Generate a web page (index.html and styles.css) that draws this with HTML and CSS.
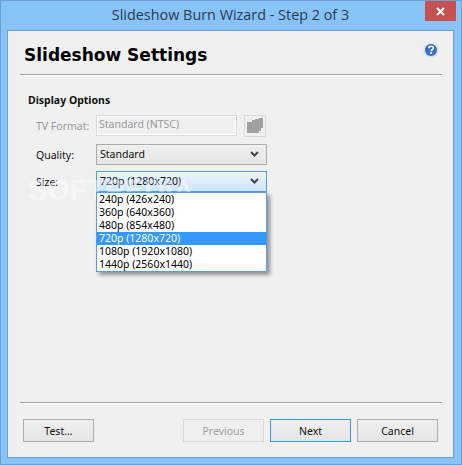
FILE: index.html
```html
<!DOCTYPE html>
<html lang="en">
<head>
    <meta charset="UTF-8">
    <title>Slideshow Burn Wizard</title>
    <link rel="stylesheet" href="styles.css">
</head>
<body>
    <div class="window">
        <div class="titlebar">
            <span class="title">Slideshow Burn Wizard - Step 2 of 3</span>
            <div class="close">
                <svg width="9" height="9" viewBox="0 0 9 9"><path d="M1 1L8 8M8 1L1 8" stroke="#fff" stroke-width="2"/></svg>
            </div>
        </div>
        <div class="content">
            <div class="header">
                <h1>Slideshow Settings</h1>
                <svg class="help" width="16" height="16" viewBox="0 0 16 16">
                    <circle cx="8" cy="8" r="7.5" fill="#d5e0f2"/>
                    <circle cx="8" cy="8" r="6" fill="#3a70c4"/>
                    <path d="M5.8 6.2C5.9 4.9 6.9 4.3 8.1 4.3C9.4 4.3 10.3 5 10.3 6.1C10.3 7.6 8.2 7.6 8.2 9.2" fill="none" stroke="#fff" stroke-width="1.6"/>
                    <rect x="7.3" y="10.2" width="1.8" height="1.8" fill="#fff"/>
                </svg>
            </div>
            <div class="divider"></div>

            <div class="options">
                <h2>Display Options</h2>
                <div class="row disabled">
                    <label>TV Format:</label>
                    <div class="field">Standard (NTSC)</div>
                    <div class="icon-btn">
                        <svg width="18" height="17" viewBox="0 0 18 17"><path d="M1 5H6V3H9V2H13V1H17V11H15V14H13V16H1Z" fill="#a0a0a0"/></svg>
                    </div>
                </div>
                <div class="row">
                    <label>Quality:</label>
                    <div class="select">
                        <span>Standard</span>
                        <svg class="chevron" width="9" height="7" viewBox="0 0 9 7"><path d="M1 1L4.5 4.5L8 1" fill="none" stroke="#444" stroke-width="2"/></svg>
                    </div>
                </div>
                <div class="row size-row">
                    <label>Size:</label>
                    <div class="select open">
                        <span>720p (1280x720)</span>
                        <svg class="chevron" width="9" height="7" viewBox="0 0 9 7"><path d="M1 1L4.5 4.5L8 1" fill="none" stroke="#444" stroke-width="2"/></svg>
                        <ul class="dropdown">
                            <li>240p (426x240)</li>
                            <li>360p (640x360)</li>
                            <li>480p (854x480)</li>
                            <li class="selected">720p (1280x720)</li>
                            <li>1080p (1920x1080)</li>
                            <li>1440p (2560x1440)</li>
                        </ul>
                    </div>
                    <div class="watermark">SOFTPEDIA</div>
                </div>
            </div>

            <div class="divider"></div>
            <div class="footer">
                <button class="btn test">Test...</button>
                <button class="btn prev" disabled>Previous</button>
                <button class="btn next">Next</button>
                <button class="btn">Cancel</button>
            </div>
        </div>
    </div>
</body>
</html>
```

FILE: styles.css
```css
html, body {
    margin: 0;
    padding: 0;
}

body {
    width: 462px;
    height: 465px;
    overflow: hidden;
    font-family: "Noto Sans", "Open Sans", Arial, sans-serif;
    font-size: 10.5px;
    color: #111;
}

.window {
    box-sizing: border-box;
    width: 462px;
    height: 465px;
    display: flex;
    flex-direction: column;
    background-color: #88c3f8;
    border: 1px solid #6f9fd0;
    padding: 0 7px 6px 6px;
}

.titlebar {
    position: relative;
    height: 29px;
    display: flex;
    justify-content: center;
    align-items: flex-start;
    flex-shrink: 0;
}

.title {
    font-family: "Open Sans", "Noto Sans", sans-serif;
    font-size: 14.4px;
    line-height: 20px;
    color: #2a3a4c;
    padding-top: 4px;
}

.close {
    position: absolute;
    top: 0;
    right: -2px;
    width: 31px;
    height: 20px;
    background-color: #c75050;
    display: flex;
    justify-content: center;
    align-items: center;
}

.content {
    flex: 1;
    display: flex;
    flex-direction: column;
    background-color: #f0f0f0;
    border: 1px solid #6f9fd0;
    padding: 0 11px 0 12px;
}

.header {
    height: 43px;
    display: flex;
    justify-content: space-between;
    align-items: flex-start;
    flex-shrink: 0;
}

h1 {
    margin: 13px 0 0 4px;
    font-family: "DejaVu Sans", Verdana, sans-serif;
    font-size: 17px;
    line-height: 22px;
    font-weight: bold;
    color: #000;
}

.help {
    margin: 11px 3px 0 0;
}

.divider {
    height: 1px;
    background-color: #a0a0a0;
    border-bottom: 1px solid #fff;
    flex-shrink: 0;
}

.options {
    flex: 1;
    padding-left: 8px;
}

h2 {
    margin: 17px 0 8px;
    font-family: "Noto Sans", sans-serif;
    font-size: 10.5px;
    line-height: 14px;
    font-weight: bold;
    color: #111;
}

.row {
    display: flex;
    align-items: center;
    margin-bottom: 6px;
    height: 21px;
}

.row label {
    width: 60px;
    padding-left: 8px;
    flex-shrink: 0;
}

.row.disabled {
    margin-bottom: 8px;
    color: #9a9a9a;
}

.field {
    box-sizing: border-box;
    width: 141px;
    height: 21px;
    line-height: 17px;
    padding-left: 2px;
    border: 1px solid #d9d9d9;
    background-color: #f0f0f0;
    outline: 1px solid #fff;
    outline-offset: -2px;
}

.icon-btn {
    box-sizing: border-box;
    width: 22px;
    height: 22px;
    margin-left: 7px;
    border: 1px solid #d9d9d9;
    display: flex;
    justify-content: center;
    align-items: center;
}

.select {
    position: relative;
    box-sizing: border-box;
    width: 171px;
    height: 21px;
    line-height: 19px;
    padding: 0 5px 0 3px;
    border: 1px solid #acacac;
    background: linear-gradient(#f0f0f0, #e5e5e5);
    display: flex;
    justify-content: space-between;
    align-items: center;
}

.select.open {
    border-color: #569de5;
    background: linear-gradient(#ecf4fc, #cde5fc);
}

.chevron {
    margin-right: 2px;
}

.dropdown {
    position: absolute;
    z-index: 2;
    top: 20px;
    left: -1px;
    box-sizing: border-box;
    width: 171px;
    height: 80px;
    margin: 0;
    padding: 0;
    list-style: none;
    background-color: #fff;
    border: 1px solid #569de5;
    box-shadow: 3px 3px 4px rgba(0, 0, 0, 0.4);
}

.dropdown li {
    height: 13px;
    line-height: 13px;
    padding-left: 2px;
    color: #000;
}

.dropdown li.selected {
    background-color: #3399ff;
    color: #fff;
}

.size-row {
    position: relative;
}

.watermark {
    position: absolute;
    top: 3px;
    left: 0;
    font-family: "Liberation Sans", Arial, sans-serif;
    font-size: 29px;
    font-weight: bold;
    color: rgba(255, 255, 255, 0.45);
    pointer-events: none;
}

.footer {
    height: 38px;
    display: flex;
    align-items: flex-start;
    padding: 15px 4px 0 3px;
    flex-shrink: 0;
}

.btn {
    box-sizing: border-box;
    width: 81px;
    height: 23px;
    margin-left: 6px;
    padding: 0;
    font-family: "Noto Sans", "Open Sans", sans-serif;
    font-size: 10.5px;
    color: #111;
    border: 1px solid #acacac;
    background: linear-gradient(#f0f0f0, #e5e5e5);
}

.btn.test {
    width: 71px;
    margin-left: 0;
    margin-right: auto;
}

.btn.prev {
    border-color: #d9d9d9;
    background: #efefef;
    color: #a0a0a0;
}

.btn.next {
    border-color: #3399ff;
}
```
